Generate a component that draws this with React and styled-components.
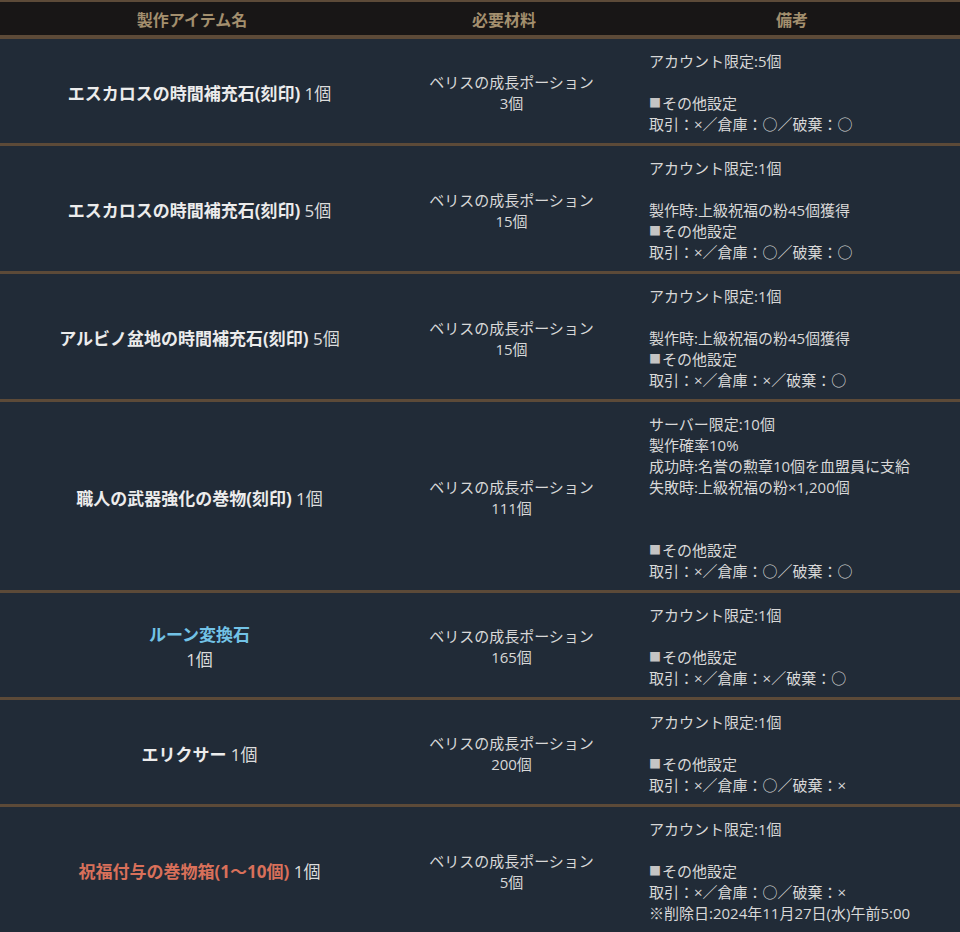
import React from "react";
import styled, { createGlobalStyle } from "styled-components";

const GlobalStyle = createGlobalStyle`
  html, body {
    margin: 0;
    padding: 0;
    background: #212b37;
  }
  body {
    font-family: "Open Sans", "Noto Sans CJK JP", sans-serif;
    color: #dcdcdc;
  }
`;

const SETTINGS = "■その他設定";

const rows = [
  {
    name: "エスカロスの時間補充石(刻印)",
    count: "1個",
    material: "ベリスの成長ポーション",
    amount: "3個",
    notes: ["アカウント限定:5個", "", SETTINGS, "取引：×／倉庫：○／破棄：○"],
  },
  {
    name: "エスカロスの時間補充石(刻印)",
    count: "5個",
    material: "ベリスの成長ポーション",
    amount: "15個",
    notes: [
      "アカウント限定:1個",
      "",
      "製作時:上級祝福の粉45個獲得",
      SETTINGS,
      "取引：×／倉庫：○／破棄：○",
    ],
  },
  {
    name: "アルビノ盆地の時間補充石(刻印)",
    count: "5個",
    material: "ベリスの成長ポーション",
    amount: "15個",
    notes: [
      "アカウント限定:1個",
      "",
      "製作時:上級祝福の粉45個獲得",
      SETTINGS,
      "取引：×／倉庫：×／破棄：○",
    ],
  },
  {
    name: "職人の武器強化の巻物(刻印)",
    count: "1個",
    material: "ベリスの成長ポーション",
    amount: "111個",
    notes: [
      "サーバー限定:10個",
      "製作確率10%",
      "成功時:名誉の勲章10個を血盟員に支給",
      "失敗時:上級祝福の粉×1,200個",
      "",
      "",
      SETTINGS,
      "取引：×／倉庫：○／破棄：○",
    ],
  },
  {
    name: "ルーン変換石",
    tone: "blue",
    stacked: true,
    count: "1個",
    material: "ベリスの成長ポーション",
    amount: "165個",
    notes: ["アカウント限定:1個", "", SETTINGS, "取引：×／倉庫：×／破棄：○"],
  },
  {
    name: "エリクサー",
    count: "1個",
    material: "ベリスの成長ポーション",
    amount: "200個",
    notes: ["アカウント限定:1個", "", SETTINGS, "取引：×／倉庫：○／破棄：×"],
  },
  {
    name: "祝福付与の巻物箱(1～10個)",
    tone: "red",
    count: "1個",
    material: "ベリスの成長ポーション",
    amount: "5個",
    notes: [
      "アカウント限定:1個",
      "",
      SETTINGS,
      "取引：×／倉庫：○／破棄：×",
      "※削除日:2024年11月27日(水)午前5:00",
    ],
  },
];

const toneColors = {
  blue: "#72c2e6",
  red: "#d9705a",
  plain: "#ececec",
};

// the small square bullet is drawn a bit smaller than the text, like the original
function Note({ text }) {
  if (text.startsWith("■")) {
    return (
      <NoteLine>
        <Square>■</Square>
        {text.slice(1)}
      </NoteLine>
    );
  }
  return <NoteLine>{text}</NoteLine>;
}

function App() {
  return (
    <>
      <GlobalStyle />
      <Table>
        <colgroup>
          <col style={{ width: "40%" }} />
          <col style={{ width: "25%" }} />
          <col style={{ width: "35%" }} />
        </colgroup>
        <thead>
          <tr>
            <HeadCell>製作アイテム名</HeadCell>
            <HeadCell>必要材料</HeadCell>
            <HeadCell>備考</HeadCell>
          </tr>
        </thead>
        <tbody>
          {rows.map((row, i) => (
            <tr key={i}>
              <NameCell>
                <ItemName $tone={row.tone || "plain"}>{row.name}</ItemName>
                {row.stacked ? <br /> : " "}
                <Count>{row.count}</Count>
              </NameCell>
              <MaterialCell>
                {row.material}
                <br />
                {row.amount}
              </MaterialCell>
              <NoteCell>
                {row.notes.map((line, j) => (
                  <Note key={j} text={line} />
                ))}
              </NoteCell>
            </tr>
          ))}
        </tbody>
      </Table>
    </>
  );
}

export default App;

const Table = styled.table`
  width: 100%;
  border-collapse: collapse;
  table-layout: fixed;
`;

const HeadCell = styled.th`
  background: #181616;
  color: #a38f6e;
  font-size: 16px;
  font-weight: 700;
  line-height: 21px;
  padding: 8px 8px 4px;
  text-align: center;
  border-top: 2px solid #5c4a38;
  border-bottom: 4px solid #5c4a38;
`;

const Cell = styled.td`
  background: #212b37;
  font-size: 15px;
  line-height: 21px;
  padding: 12px 10px 8px 25px;
  vertical-align: middle;
  border-bottom: 3px solid #5c4a38;
`;

const NameCell = styled(Cell)`
  text-align: center;
  font-size: 17px;
  line-height: 25px;
`;

const ItemName = styled.span`
  font-weight: 700;
  color: ${(p) => toneColors[p.$tone]};
`;

const Count = styled.span`
  color: #dcdcdc;
`;

const MaterialCell = styled(Cell)`
  text-align: center;
  color: #d8d8d8;
`;

const NoteCell = styled(Cell)`
  text-align: left;
  color: #d8d8d8;
`;

const NoteLine = styled.div`
  min-height: 21px;
`;

const Square = styled.span`
  display: inline-block;
  width: 13px;
  font-size: 12px;
  color: #c4c4c4;
  vertical-align: 1px;
`;
